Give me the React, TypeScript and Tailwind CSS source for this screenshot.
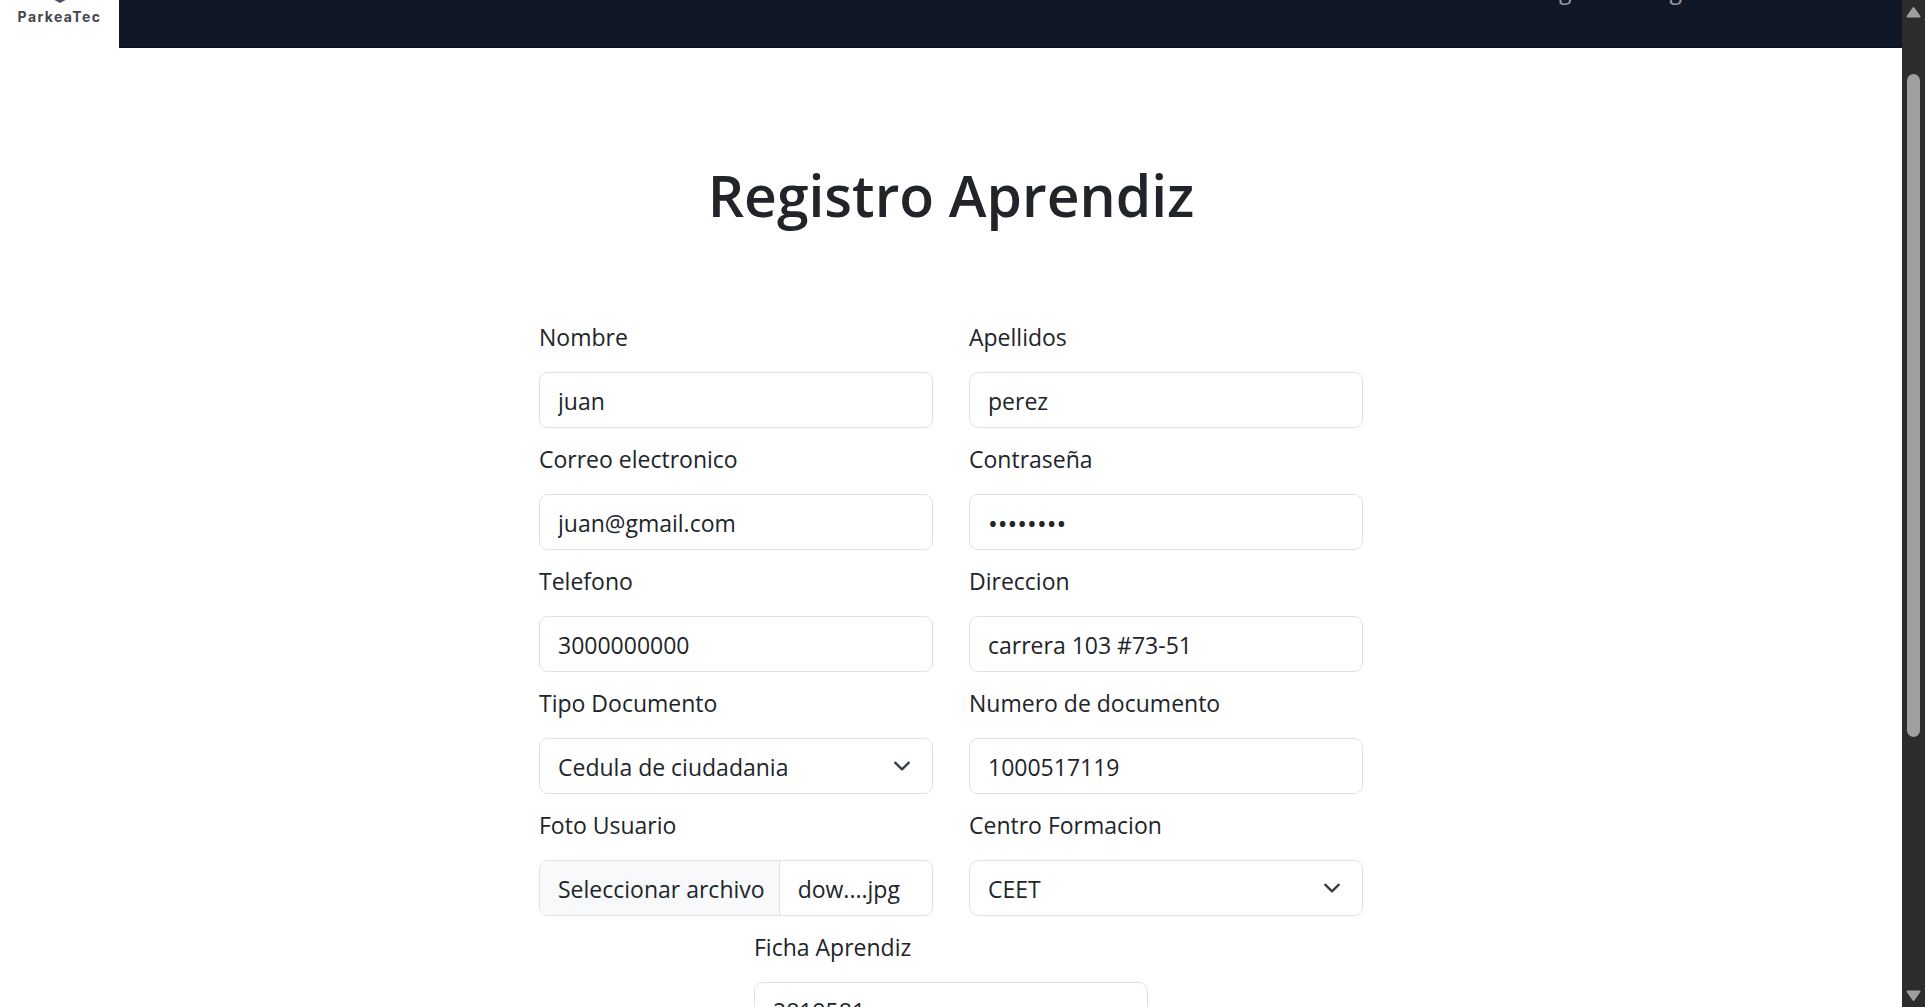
import type { ReactNode } from "react";

const control =
  "h-14 w-full rounded-[9px] border border-[#dee2e6] bg-white px-[18px] pt-[2px] text-[#212529] outline-none focus:border-[#86b7fe]";

function Field({ id, label, children }: { id: string; label: string; children: ReactNode }) {
  return (
    <div className="flex flex-col gap-[17px]">
      <label htmlFor={id} className="leading-9">
        {label}
      </label>
      {children}
    </div>
  );
}

function TextField({ id, label, value, type = "text" }: { id: string; label: string; value: string; type?: string }) {
  return (
    <Field id={id} label={label}>
      <input
        id={id}
        name={id}
        type={type}
        defaultValue={value}
        className={type === "password" ? `${control} text-[26px]` : control}
      />
    </Field>
  );
}

function SelectField({ id, label, options }: { id: string; label: string; options: string[] }) {
  return (
    <Field id={id} label={label}>
      <div className="grid items-center">
        <select id={id} name={id} className={`${control} col-start-1 row-start-1 appearance-none`}>
          {options.map((option) => (
            <option key={option}>{option}</option>
          ))}
        </select>
        <svg
          viewBox="0 0 16 16"
          aria-hidden="true"
          className="pointer-events-none col-start-1 row-start-1 mr-[22px] size-[18px] justify-self-end"
        >
          <path d="m2 5 6 6 6-6" fill="none" stroke="#343a40" strokeWidth="2" strokeLinecap="round" strokeLinejoin="round" />
        </svg>
      </div>
    </Field>
  );
}

function FileField({ id, label, fileName }: { id: string; label: string; fileName: string }) {
  return (
    <Field id={id} label={label}>
      <label className="flex h-14 cursor-pointer items-stretch overflow-hidden rounded-[9px] border border-[#dee2e6]">
        <input id={id} name={id} type="file" className="sr-only" />
        <span className="flex items-center border-r border-[#dee2e6] bg-[#f8f9fa] pt-[2px] pr-[14px] pl-[18px] whitespace-nowrap">
          Seleccionar archivo
        </span>
        <span className="flex items-center px-[18px] pt-[2px]">{fileName}</span>
      </label>
    </Field>
  );
}

function Header() {
  return (
    <header className="-mt-16 flex h-28 shrink-0 items-center justify-between bg-[#101726] shadow-[inset_0_-1px_0_#0b0d20]">
      <a
        href="#inicio"
        className="flex h-full w-[119px] flex-col items-center justify-end bg-white pb-[21px] text-sm leading-5 font-bold tracking-widest text-[#43464e]"
      >
        <svg viewBox="0 0 40 44" aria-hidden="true" className="mb-1 h-11 w-10">
          <path d="M20 4 38 14v20L20 44 2 34V14z" fill="#4a4e57" />
        </svg>
        <span className="font-['Inter',sans-serif]">ParkeaTec</span>
      </a>
      <nav className="mr-[188px] flex pb-1 text-[#9b9da3]">
        <a href="#registro" className="px-3">
          Registro
        </a>
        <a href="#login" className="px-3">
          Login
        </a>
      </nav>
    </header>
  );
}

function ScrollRail() {
  return (
    <div className="flex w-[23px] shrink-0 flex-col items-center justify-between bg-[#2c2c2c] pt-[6px] pb-[5px]">
      <svg viewBox="0 0 15 12" aria-hidden="true" className="h-3 w-[15px]">
        <path d="M7.5 2 13.5 10.5H1.5z" fill="#9f9f9f" stroke="#9f9f9f" strokeWidth="2" strokeLinejoin="round" />
      </svg>
      <div className="mt-14 h-[663px] w-[13px] rounded-full bg-[#9f9f9f]" />
      <div className="flex-1" />
      <svg viewBox="0 0 15 12" aria-hidden="true" className="h-3 w-[15px]">
        <path d="M7.5 10 13.5 1.5H1.5z" fill="#9f9f9f" stroke="#9f9f9f" strokeWidth="2" strokeLinejoin="round" />
      </svg>
    </div>
  );
}

export default function App() {
  return (
    <div className="flex h-screen overflow-hidden bg-white font-['Open_Sans',sans-serif] text-[23px] text-[#212529]">
      <div className="flex min-w-0 flex-1 flex-col overflow-hidden">
        <Header />
        <main className="px-6 pt-[111px]">
          <h1 className="text-center text-[57px] leading-[72px] font-semibold">Registro Aprendiz</h1>
          <form className="mx-auto mt-[88px] grid max-w-[824px] grid-cols-2 gap-x-9 gap-y-[13px]">
            <TextField id="nombre" label="Nombre" value="juan" />
            <TextField id="apellidos" label="Apellidos" value="perez" />
            <TextField id="correo" label="Correo electronico" value="juan@gmail.com" type="email" />
            <TextField id="contrasena" label="Contraseña" value="12345678" type="password" />
            <TextField id="telefono" label="Telefono" value="3000000000" />
            <TextField id="direccion" label="Direccion" value="carrera 103 #73-51" />
            <SelectField id="tipo-documento" label="Tipo Documento" options={["Cedula de ciudadania"]} />
            <TextField id="numero-documento" label="Numero de documento" value="1000517119" />
            <FileField id="foto" label="Foto Usuario" fileName="dow....jpg" />
            <SelectField id="centro" label="Centro Formacion" options={["CEET"]} />
            <div className="col-span-2 mx-auto w-[394px]">
              <TextField id="ficha" label="Ficha Aprendiz" value="2819581" />
            </div>
          </form>
        </main>
      </div>
      <ScrollRail />
    </div>
  );
}
